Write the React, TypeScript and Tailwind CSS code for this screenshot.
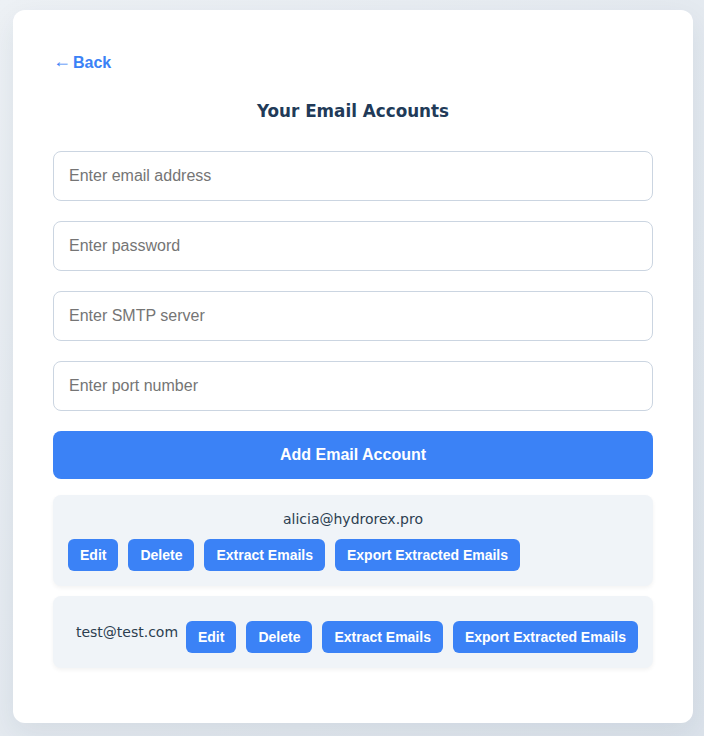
import { useState } from 'react'

interface Account {
    email: string
}

const accounts: Account[] = [
    { email: 'alicia@hydrorex.pro' },
    { email: 'test@test.com' }
]

const uiFont = "font-['Liberation_Sans',Arial,sans-serif]"
const bodyFont = "font-['DejaVu_Sans',Verdana,sans-serif]"

function SmallButton({ label }: { label: string }) {
    return (
        <button className={`h-[32px] px-[12px] rounded-[6px] bg-[#3b82f6] text-white text-[14px] font-bold whitespace-nowrap ${uiFont}`}>
            {label}
        </button>
    )
}

export default function App() {
    const [email, setEmail] = useState('')
    const [password, setPassword] = useState('')
    const [smtp, setSmtp] = useState('')
    const [port, setPort] = useState('')

    const fields = [
        { value: email, set: setEmail, placeholder: 'Enter email address', type: 'email' },
        { value: password, set: setPassword, placeholder: 'Enter password', type: 'password' },
        { value: smtp, set: setSmtp, placeholder: 'Enter SMTP server', type: 'text' },
        { value: port, set: setPort, placeholder: 'Enter port number', type: 'text' }
    ]

    return (
        <div className={`min-h-[736px] bg-gradient-to-br from-[#edf1f5] to-[#dce3eb] pt-[10px] ${bodyFont}`}>
            <div className="w-[680px] ml-[13px] bg-white rounded-[12px] shadow-[0_10px_30px_rgba(30,50,80,0.08)] px-[40px] pt-[40px] pb-[40px]">
                <div className="h-[26px] flex items-center">
                    <button className={`flex items-center text-[#3b82f6] text-[16px] font-bold ${uiFont}`}>
                        <span className="font-normal text-[18px] leading-[18px] mr-[2px] -translate-y-[2px]">←</span>
                        Back
                    </button>
                </div>

                <h2 className="mt-[25px] h-[20px] leading-[20px] text-center text-[16.8px] font-bold text-[#213a58]">
                    Your Email Accounts
                </h2>

                <div className="mt-[30px] flex flex-col gap-[20px]">
                    {fields.map((f) => (
                        <input
                            key={f.placeholder}
                            type={f.type}
                            value={f.value}
                            onChange={(e) => f.set(e.target.value)}
                            placeholder={f.placeholder}
                            className={`h-[50px] w-full px-[15px] border border-[#cbd5e1] rounded-[8px] text-[16px] text-[#2c3e50] placeholder:text-[#757575] outline-none ${uiFont}`}
                        />
                    ))}
                    <button className={`h-[48px] w-full rounded-[8px] bg-[#3b82f6] text-white text-[16px] font-bold ${uiFont}`}>
                        Add Email Account
                    </button>
                </div>

                <div className="mt-[16px] flex flex-col gap-[10px] mb-[15px]">
                    {accounts.map((a) => (
                        <div
                            key={a.email}
                            className="flex flex-wrap items-center justify-between bg-[#f0f4f8] rounded-[8px] px-[15px] py-[15px] shadow-[0_2px_4px_rgba(0,0,0,0.05)]"
                        >
                            <span className="flex-1 text-center text-[14px] leading-[19px] text-[#2c3e50]">{a.email}</span>
                            <div className="flex gap-[10px] mt-[10px]">
                                <SmallButton label="Edit" />
                                <SmallButton label="Delete" />
                                <SmallButton label="Extract Emails" />
                                <SmallButton label="Export Extracted Emails" />
                            </div>
                        </div>
                    ))}
                </div>
            </div>
        </div>
    )
}
